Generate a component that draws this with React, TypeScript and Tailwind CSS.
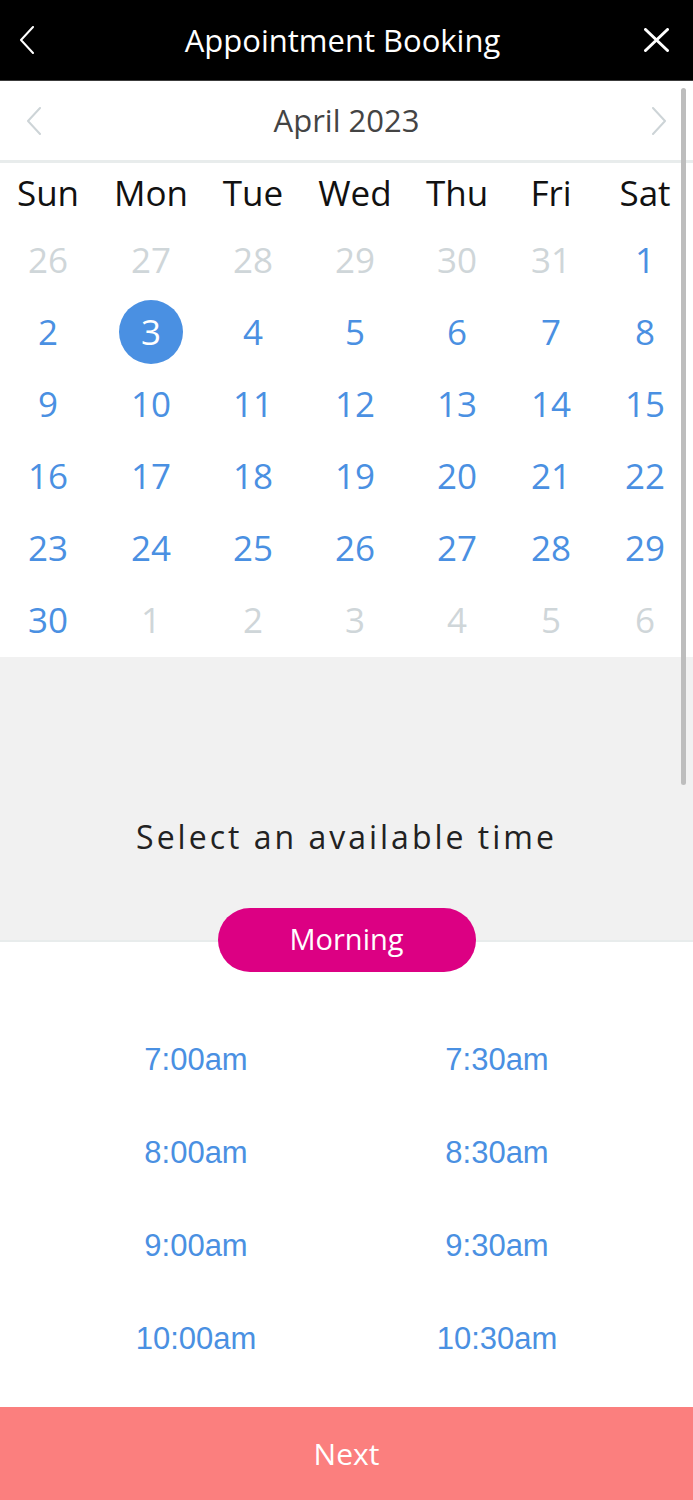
import React from "react";

const weekdays = ["Sun", "Mon", "Tue", "Wed", "Thu", "Fri", "Sat"];

type Day = { n: number; inMonth: boolean };

const days: Day[] = [
  ...[26, 27, 28, 29, 30, 31].map((n) => ({ n, inMonth: false })),
  ...Array.from({ length: 30 }, (_, i) => ({ n: i + 1, inMonth: true })),
  ...[1, 2, 3, 4, 5, 6].map((n) => ({ n, inMonth: false })),
];

const times = ["7:00am", "7:30am", "8:00am", "8:30am", "9:00am", "9:30am", "10:00am", "10:30am"];

function Chevron({ dir, className }: { dir: "left" | "right"; className?: string }) {
  return (
    <svg width="16" height="28" viewBox="0 0 16 28" fill="none" className={className}>
      <path
        d={dir === "left" ? "M14 1 L2 14 L14 27" : "M2 1 L14 14 L2 27"}
        stroke="currentColor"
        strokeWidth="2"
        strokeLinecap="round"
        strokeLinejoin="round"
      />
    </svg>
  );
}

export default function App() {
  const selected = 3;

  return (
    <main className="relative flex h-[1500px] w-full flex-col overflow-hidden bg-white font-['Open_Sans',sans-serif]">
      {/* header */}
      <header className="flex h-[81px] items-center justify-between border-b border-[#3c3c3c] bg-black pl-[19px] pr-[24px]">
        <Chevron dir="left" className="text-white" />
        <h1 className="ml-[6px] text-[31px] text-white">Appointment Booking</h1>
        <svg width="25" height="24" viewBox="0 0 25 24" className="text-white">
          <path d="M1.5 1.5 L23.5 22.5 M23.5 1.5 L1.5 22.5" stroke="currentColor" strokeWidth="3" strokeLinecap="round" />
        </svg>
      </header>

      {/* month nav */}
      <div className="flex h-[82px] items-center justify-between border-b-[3px] border-[#e8ecec] px-[26px]">
        <Chevron dir="left" className="text-[#cdd4d7]" />
        <div className="text-[31px] text-[#444]">April 2023</div>
        <Chevron dir="right" className="text-[#cdd4d7]" />
      </div>

      {/* calendar */}
      <div className="grid grid-cols-[96px_110px_94px_110px_94px_94px_94px]">
        {weekdays.map((d) => (
          <div key={d} className="flex h-[61px] items-center justify-center text-[35px] text-[#111]">
            {d}
          </div>
        ))}
        {days.map((d, i) => (
          <div key={i} className="flex h-[72px] items-center justify-center">
            {d.inMonth && d.n === selected ? (
              <span className="flex h-[64px] w-[64px] items-center justify-center rounded-full bg-[#4a90e2] text-[35px] text-white">
                {d.n}
              </span>
            ) : (
              <span className={`text-[35px] ${d.inMonth ? "text-[#4a90e2]" : "text-[#cfd6d9]"}`}>{d.n}</span>
            )}
          </div>
        ))}
      </div>

      {/* time picker */}
      <div className="mt-px flex h-[283px] items-end justify-center bg-[#f1f1f1] pb-[79px]">
        <p className="text-[32px] tracking-[3px] text-[#222]">Select an available time</p>
      </div>
      <div className="flex flex-1 flex-col border-t-2 border-[#e8ecec]">
        <div className="-mt-[34px] flex justify-center">
          <button className="h-[64px] w-[258px] rounded-full bg-[#dc0083] pb-[2px] text-[29px] text-white">Morning</button>
        </div>
        <div className="mx-auto mt-[42px] grid w-[602px] grid-cols-2">
          {times.map((t) => (
            <div
              key={t}
              className="flex h-[93px] items-center justify-center font-['Liberation_Sans',Arial,sans-serif] text-[31px] text-[#4a90e2]"
            >
              {t}
            </div>
          ))}
        </div>
        <button className="mt-auto h-[93px] w-full bg-[#fb7f7e] text-[30px] text-white">Next</button>
      </div>

      {/* scrollbar */}
      <div className="absolute right-[7px] top-[88px] h-[697px] w-[5px] rounded-full bg-[#bdbdbd]" />
    </main>
  );
}
